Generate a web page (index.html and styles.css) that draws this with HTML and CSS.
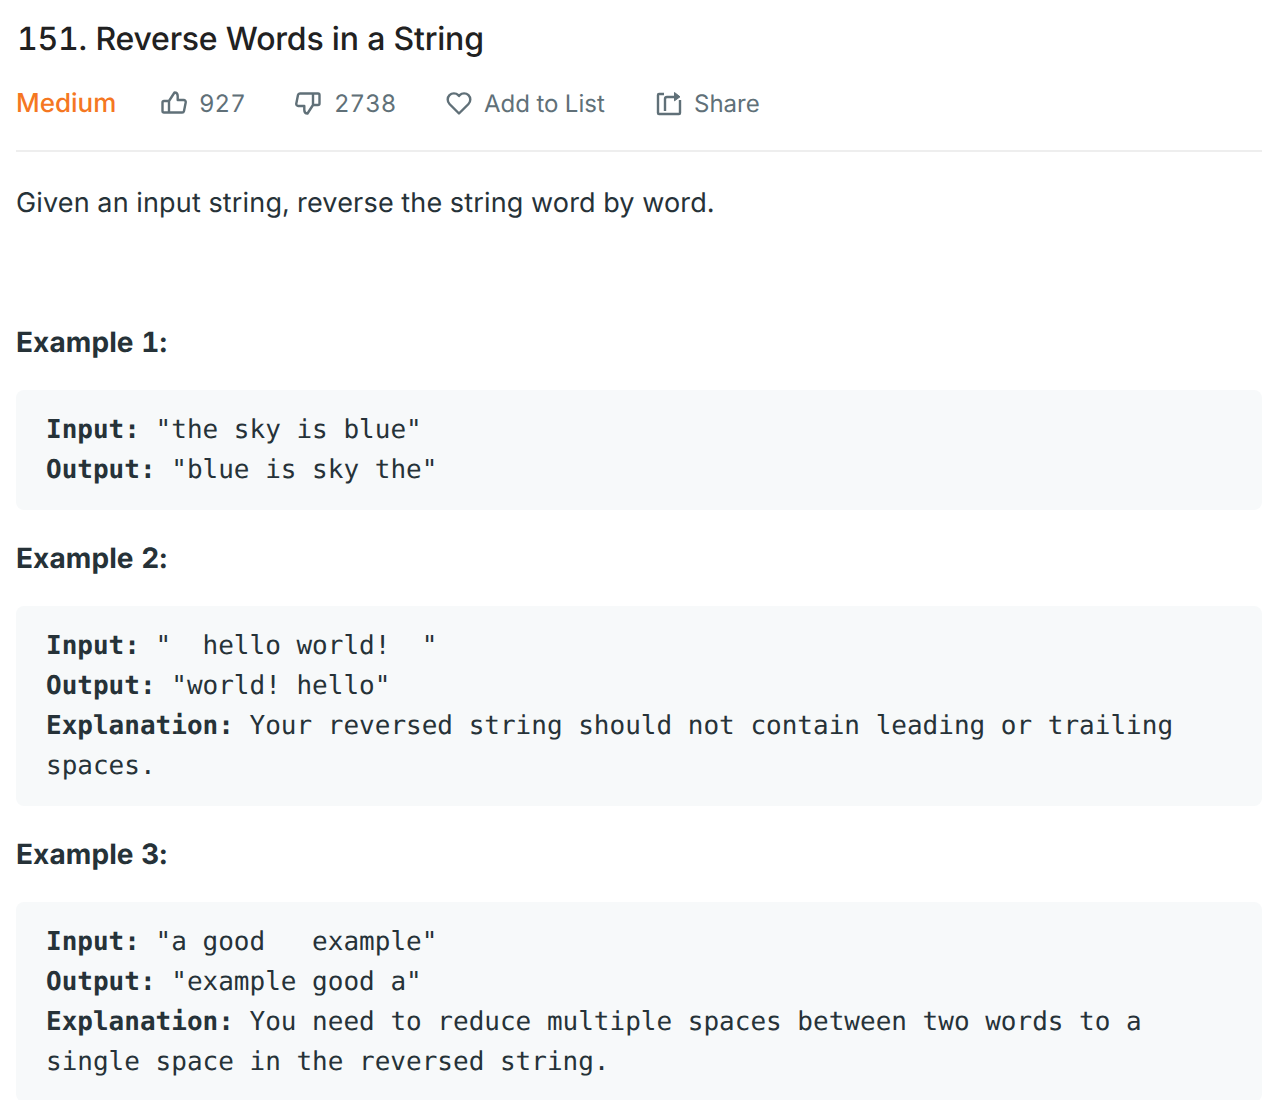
FILE: index.html
```html
<!DOCTYPE html>
<html lang="en">
<head>
<meta charset="utf-8">
<title>151. Reverse Words in a String</title>
<link rel="stylesheet" href="styles.css">
</head>
<body>
<main class="page">
  <h1 class="title">151. Reverse Words in a String</h1>
  <div class="meta">
    <span class="difficulty">Medium</span>
    <span class="action action-like">
      <svg class="icon" viewBox="0 0 26 26" fill="none" stroke="currentColor" stroke-width="2.4" stroke-linejoin="round" stroke-linecap="round"><path d="M8 11v11.500H3a1.500 1.500 0 0 1-1.500-1.500v-8.500A1.500 1.500 0 0 1 3 11h5l5.500-8.500c2 0 3.200 1.500 3.200 3.500v4h6a2 2 0 0 1 2 2.400l-1.700 8.500a2 2 0 0 1-2 1.600H8"/></svg>
      <span>927</span>
    </span>
    <span class="action action-dislike">
      <svg class="icon" viewBox="0 0 26 26" fill="none" stroke="currentColor" stroke-width="2.4" stroke-linejoin="round" stroke-linecap="round"><g transform="rotate(180 13 13)"><path d="M8 11v11.500H3a1.500 1.500 0 0 1-1.500-1.500v-8.500A1.500 1.500 0 0 1 3 11h5l5.500-8.500c2 0 3.200 1.500 3.200 3.500v4h6a2 2 0 0 1 2 2.400l-1.700 8.500a2 2 0 0 1-2 1.600H8"/></g></svg>
      <span>2738</span>
    </span>
    <span class="action action-list">
      <svg class="icon" viewBox="0 0 26 26" fill="none" stroke="currentColor" stroke-width="2.4" stroke-linejoin="round"><path d="M13 23.500 3.500 14a6.300 6.300 0 0 1 0-8.800 6.200 6.200 0 0 1 8.800 0l.7.800.7-.8a6.200 6.200 0 0 1 8.800 0 6.300 6.300 0 0 1 0 8.800z"/></svg>
      <span>Add to List</span>
    </span>
    <span class="action">
      <svg class="icon" viewBox="0 0 26 26" fill="none" stroke="currentColor" stroke-width="2.4" stroke-linejoin="round"><path d="M8 4H3a1 1 0 0 0-1 1v18a1 1 0 0 0 1 1h20a1 1 0 0 0 1-1V10"/><path d="M9 21V9a2 2 0 0 1 2-2h9"/><path d="M18.500 2.500 24 6.800l-5.500 4z" fill="currentColor" stroke-width="1"/></svg>
      <span>Share</span>
    </span>
  </div>
  <div class="content">
    <p class="intro">Given an input string, reverse the string word by word.</p>
    <p class="example-title">Example 1:</p>
    <pre class="code"><strong>Input:</strong> "the sky is blue"
<strong>Output:</strong> "blue is sky the"</pre>
    <p class="example-title">Example 2:</p>
    <pre class="code"><strong>Input:</strong> "  hello world!  "
<strong>Output:</strong> "world! hello"
<strong>Explanation:</strong> Your reversed string should not contain leading or trailing
spaces.</pre>
    <p class="example-title">Example 3:</p>
    <pre class="code"><strong>Input:</strong> "a good   example"
<strong>Output:</strong> "example good a"
<strong>Explanation:</strong> You need to reduce multiple spaces between two words to a
single space in the reversed string.</pre>
  </div>
</main>
</body>
</html>
```
FILE: styles.css
```css
html, body {
  margin: 0;
  height: 1100px;
  overflow: hidden;
  background: #fff;
}
.page {
  padding: 0 6px 0 16px;
  font-family: Inter, "Liberation Sans", sans-serif;
  font-feature-settings: "tnum";
  text-rendering: geometricPrecision;
  color: #263238;
}
.title {
  margin: 0;
  padding: 20px 0 0 1px;
  font-size: 32px;
  line-height: 38px;
  font-weight: 500;
  letter-spacing: -0.2px;
  color: #212121;
}
.meta {
  display: flex;
  align-items: center;
  height: 94px;
  border-bottom: 2px solid #eeeeee;
  box-sizing: border-box;
  padding-bottom: 2px;
  font-size: 24px;
  color: #607078;
}
.difficulty {
  color: #f57722;
  font-weight: 500;
  font-size: 26px;
  line-height: 32px;
  padding-top: 1px;
  width: 145px;
}
.action {
  display: flex;
  align-items: center;
  gap: 12px;
}
.action-like { width: 134px; }
.action-dislike { width: 151px; gap: 13px; }
.action-list { width: 210px; }
.icon {
  width: 26px;
  height: 26px;
  flex: none;
}
.content {
  font-size: 27px;
  line-height: 40px;
}
.intro {
  margin: 0;
  padding-top: 31px;
  height: 142px;
  box-sizing: border-box;
  letter-spacing: 0.18px;
  color: #263238;
}
.example-title {
  margin: 0;
  padding: 28px 0;
  font-size: 28px;
  font-weight: 700;
  line-height: 40px;
  letter-spacing: 0.1px;
}
.code {
  margin: 0;
  padding: 20px 30px;
  background: #f7f9fa;
  border-radius: 8px;
  font-family: "DejaVu Sans Mono", monospace;
  font-size: 26px;
  line-height: 40px;
  white-space: pre-wrap;
  color: #263238;
}
.code strong {
  font-weight: 700;
}
```
